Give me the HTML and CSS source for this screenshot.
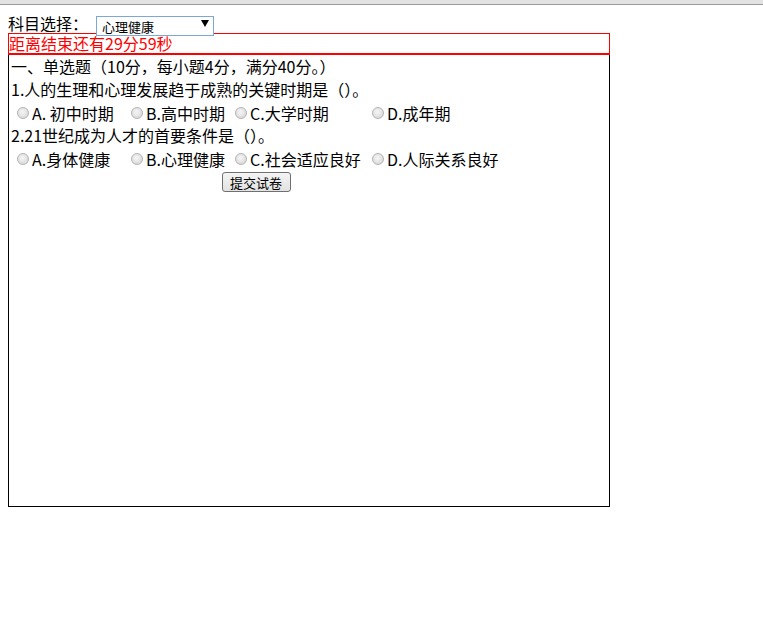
FILE: index.html
```html
<!DOCTYPE html>
<html lang="zh-CN">

<head>
    <meta charset="UTF-8">
    <title>在线考试</title>
    <link rel="stylesheet" href="styles.css">
</head>

<body>
    <div class="topbar"></div>

    <div class="page">
        <div class="subject-row">
            <span class="subject-label">科目选择：</span>
            <div class="select-wrap">
                <select class="subject-select">
                    <option>心理健康</option>
                    <option>大学英语</option>
                    <option>高等数学</option>
                </select>
                <span class="select-arrow"></span>
            </div>
        </div>

        <div class="timer">距离结束还有29分59秒</div>

        <div class="paper">
            <div class="line">一、单选题（10分，每小题4分，满分40分。）</div>

            <div class="line">1.人的生理和心理发展趋于成熟的关键时期是（）。</div>
            <div class="choices">
                <label class="choice"><input type="radio" name="q1">A. 初中时期</label>
                <label class="choice"><input type="radio" name="q1">B.高中时期</label>
                <label class="choice"><input type="radio" name="q1">C.大学时期</label>
                <label class="choice"><input type="radio" name="q1">D.成年期</label>
            </div>

            <div class="line">2.21世纪成为人才的首要条件是（）。</div>
            <div class="choices">
                <label class="choice"><input type="radio" name="q2">A.身体健康</label>
                <label class="choice"><input type="radio" name="q2">B.心理健康</label>
                <label class="choice"><input type="radio" name="q2">C.社会适应良好</label>
                <label class="choice"><input type="radio" name="q2">D.人际关系良好</label>
            </div>

            <div class="submit-row">
                <button class="submit-btn">提交试卷</button>
            </div>
        </div>
    </div>
</body>

</html>
```

FILE: styles.css
```css
body {
    margin: 0;
    font-family: "Noto Sans CJK SC", "DejaVu Sans", sans-serif;
    font-size: 16px;
    color: #000;
    background-color: #fff;
}

.topbar {
    height: 4px;
    background-color: #e2e2e2;
    border-bottom: 1px solid #9c9c9c;
}

.page {
    padding: 8px 8px 0 8px;
}

.subject-row {
    display: flex;
    align-items: center;
    height: 20px;
}

.subject-label {
    width: 88px;
    line-height: 20px;
}

.select-wrap {
    position: relative;
    width: 118px;
    height: 20px;
}

.subject-select {
    appearance: none;
    -webkit-appearance: none;
    box-sizing: border-box;
    width: 100%;
    height: 100%;
    margin: 0;
    padding: 0 0 0 5px;
    border: 1px solid #7fa6d9;
    border-radius: 0;
    background-color: #fff;
    font-family: "Noto Sans CJK SC", sans-serif;
    font-size: 13px;
    color: #000;
    outline: none;
}

/* the little black triangle on the right of the select */
.select-arrow {
    position: absolute;
    right: 5px;
    top: 7px;
    width: 0;
    height: 0;
    border-left: 4px solid transparent;
    border-right: 4px solid transparent;
    border-top: 7px solid #000;
    pointer-events: none;
}

.timer {
    width: 600px;
    height: 19px;
    line-height: 19px;
    border: 1px solid #ff0000;
    border-bottom: 2px solid #ff0000;
    color: #ff0000;
}

.paper {
    width: 600px;
    height: 451px;
    border: 1px solid #000;
    border-top: none;
}

.line {
    height: 23px;
    line-height: 23px;
    padding-left: 2px;
    white-space: nowrap;
}

.choices {
    display: grid;
    grid-template-columns: 114px 104px 137px auto;
    padding-left: 8px;
    height: 23px;
}

.choice {
    display: flex;
    align-items: center;
    height: 23px;
    white-space: nowrap;
}

.choice input {
    appearance: none;
    -webkit-appearance: none;
    width: 12px;
    height: 12px;
    margin: 0 3px 0 0;
    border: 1px solid #b4b4b4;
    border-radius: 50%;
    background: radial-gradient(circle at 45% 40%, #f6f6f6 0%, #e6e6e6 45%, #cfcfcf 100%);
    box-sizing: border-box;
}

.submit-row {
    width: 494px;
    height: 23px;
    display: flex;
    justify-content: center;
    align-items: center;
}

.submit-btn {
    width: 69px;
    height: 20px;
    padding: 0;
    font-family: "Noto Sans CJK SC", sans-serif;
    font-size: 13px;
    color: #000;
    border: 1px solid #707070;
    border-radius: 3px;
    background: linear-gradient(#f4f4f4, #e2e2e2);
}
```
